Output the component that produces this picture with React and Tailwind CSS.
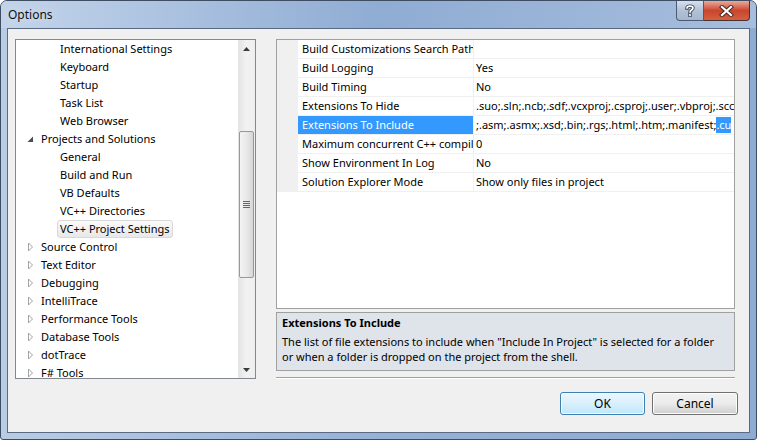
import React from 'react';

const FONT = "font-['Noto_Sans',sans-serif] text-[11px]";

const treeItems = [
  { t: 'International Settings', lvl: 1 },
  { t: 'Keyboard', lvl: 1 },
  { t: 'Startup', lvl: 1 },
  { t: 'Task List', lvl: 1 },
  { t: 'Web Browser', lvl: 1 },
  { t: 'Projects and Solutions', lvl: 0, open: true },
  { t: 'General', lvl: 1 },
  { t: 'Build and Run', lvl: 1 },
  { t: 'VB Defaults', lvl: 1 },
  { t: 'VC++ Directories', lvl: 1 },
  { t: 'VC++ Project Settings', lvl: 1, selected: true },
  { t: 'Source Control', lvl: 0 },
  { t: 'Text Editor', lvl: 0 },
  { t: 'Debugging', lvl: 0 },
  { t: 'IntelliTrace', lvl: 0 },
  { t: 'Performance Tools', lvl: 0 },
  { t: 'Database Tools', lvl: 0 },
  { t: 'dotTrace', lvl: 0 },
  { t: 'F# Tools', lvl: 0 },
];

const props = [
  { n: 'Build Customizations Search Path', v: '' },
  { n: 'Build Logging', v: 'Yes' },
  { n: 'Build Timing', v: 'No' },
  { n: 'Extensions To Hide', v: '.suo;.sln;.ncb;.sdf;.vcxproj;.csproj;.user;.vbproj;.scc;.vspscc;.vssscc' },
  { n: 'Extensions To Include', v: ';.asm;.asmx;.xsd;.bin;.rgs;.html;.htm;.manifest;', sel: true },
  { n: 'Maximum concurrent C++ compilations', v: '0' },
  { n: 'Show Environment In Log', v: 'No' },
  { n: 'Solution Explorer Mode', v: 'Show only files in project' },
];

const Arrow = ({ open }) =>
  open ? (
    <svg width="7" height="7" viewBox="0 0 7 7">
      <path d="M6 0.5 L6 6 L0.5 6 Z" fill="#4d4d4d" />
    </svg>
  ) : (
    <svg width="7" height="10" viewBox="0 0 7 10">
      <path d="M1.5 1 L5.5 5 L1.5 9 Z" fill="#ffffff" stroke="#a3a3a3" strokeWidth="1" />
    </svg>
  );

const TreeRow = ({ item }) => {
  if (item.lvl === 0) {
    return (
      <div className="h-[18px] flex items-center whitespace-nowrap">
        <div className="w-[25px] pl-[11px] flex items-center">
          <Arrow open={item.open} />
        </div>
        <span className="pt-[1px]">{item.t}</span>
      </div>
    );
  }
  return (
    <div className="h-[18px] flex items-center whitespace-nowrap pl-[41px]">
      <span
        className={
          'h-[18px] flex items-center px-[2px] rounded-[3px] border ' +
          (item.selected
            ? 'border-[#d9d9d9] bg-gradient-to-b from-[#fafafa] to-[#e8e8e8]'
            : 'border-transparent')
        }
      >
        {item.t}
      </span>
    </div>
  );
};

const ScrollBar = () => (
  <div className="w-[17px] h-full flex flex-col bg-gradient-to-r from-[#e3e3e3] via-[#f2f2f2] to-[#eeeeee]">
    <div className="h-[17px] flex items-center justify-center">
      <svg width="7" height="4" viewBox="0 0 7 4">
        <path d="M0 4 L3.5 0 L7 4 Z" fill="#3b3b3b" />
      </svg>
    </div>
    <div className="h-[74px]" />
    <div className="mx-[1px] h-[147px] rounded-[2px] border border-[#989898] bg-gradient-to-r from-[#f4f4f4] via-[#e9e9e9] to-[#d6d6d6] flex flex-col items-center justify-center gap-[1px]">
      <div className="w-[7px] h-[1px] bg-[#666]" />
      <div className="w-[7px] h-[1px] bg-[#666]" />
      <div className="w-[7px] h-[1px] bg-[#666]" />
      <div className="w-[7px] h-[1px] bg-[#666]" />
    </div>
    <div className="flex-1" />
    <div className="h-[17px] flex items-center justify-center">
      <svg width="7" height="4" viewBox="0 0 7 4">
        <path d="M0 0 L3.5 4 L7 0 Z" fill="#3b3b3b" />
      </svg>
    </div>
  </div>
);

const Tree = () => (
  <div className="w-[241px] h-[340px] border border-[#828790] bg-white flex overflow-hidden">
    <div className="flex-1 overflow-hidden text-black">
      {treeItems.map((it) => (
        <TreeRow key={it.t} item={it} />
      ))}
    </div>
    <ScrollBar />
  </div>
);

const PropGrid = () => (
  <div className="h-[271px] border border-[#a0a0a0] bg-white flex flex-col overflow-hidden">
    {props.map((p) => (
      <div key={p.n} className="h-[19px] flex shrink-0">
        <div className="w-[21px] bg-[#f0f0f0]" />
        <div className="w-[176px] flex border-b border-r border-[#f0f0f0]">
          <div
            className={
              'flex-1 flex items-center px-[4px] whitespace-nowrap overflow-hidden ' +
              (p.sel ? 'bg-[#3399ff] text-white' : '')
            }
          >
            {p.n}
          </div>
        </div>
        <div className="flex-1 flex border-b border-[#f0f0f0] overflow-hidden">
          {p.sel ? (
            <div className="flex-1 flex items-center pl-[2px] overflow-hidden whitespace-nowrap">
              <span className="shrink-0">{p.v}</span>
              <span className="shrink-0 bg-[#3399ff] text-white">.cu</span>
            </div>
          ) : (
            <div className="flex-1 flex items-center pl-[2px] overflow-hidden whitespace-nowrap">{p.v}</div>
          )}
        </div>
      </div>
    ))}
  </div>
);

const Description = () => (
  <div className="mt-[3px] h-[59px] border border-[#a0a0a0] bg-[#dfe3ea] px-[5px] pt-[1px] leading-[15px] text-black whitespace-nowrap overflow-hidden">
    <div className="font-bold h-[17px] mb-[3px] flex items-center">Extensions To Include</div>
    <div>The list of file extensions to include when "Include In Project" is selected for a folder</div>
    <div>or when a folder is dropped on the project from the shell.</div>
  </div>
);

const CloseGlyph = () => (
  <svg width="15" height="12" viewBox="0 0 15 12">
    <path d="M3 2 L12 10 M12 2 L3 10" stroke="#4a2a26" strokeWidth="4.2" strokeLinecap="square" />
    <path d="M3 2 L12 10 M12 2 L3 10" stroke="#ffffff" strokeWidth="2.2" strokeLinecap="square" />
  </svg>
);

const HelpGlyph = () => (
  <svg width="10" height="13" viewBox="0 0 10 13">
    <path
      d="M2 4 C2 1.5 8 1.5 8 4 C8 6 5 6 5 8 M5 10.5 L5 11.5"
      fill="none"
      stroke="#3a4658"
      strokeWidth="3.4"
      strokeLinecap="square"
    />
    <path
      d="M2 4 C2 1.5 8 1.5 8 4 C8 6 5 6 5 8 M5 10.5 L5 11.5"
      fill="none"
      stroke="#ffffff"
      strokeWidth="1.6"
      strokeLinecap="square"
    />
  </svg>
);

export default function App() {
  return (
    <div className={`${FONT} w-[757px] h-[440px] flex flex-col border border-[#3f4d62] rounded-t-[7px] rounded-b-[3px] bg-gradient-to-r from-[#b9cce5] via-[#96b1d6] to-[#8eabd2] overflow-hidden`}>
      {/* Title bar */}
      <div className="h-[27px] flex items-start shrink-0 bg-gradient-to-r from-[#c3d4ea] via-[#8facd3] to-[#a6bddd]">
        <div className="pl-[7px] pt-[5px] leading-[18px] text-[12px] text-[#111] [text-shadow:0_0_6px_#dce7f5]">Options</div>
        <div className="ml-auto mr-[6px] flex">
          <div className="w-[28px] h-[20px] rounded-bl-[4px] border border-t-0 border-[#4b5a70] bg-gradient-to-b from-[#d6e0ee] via-[#b1c1d6] to-[#a5b7cf] flex items-center justify-center">
            <HelpGlyph />
          </div>
          <div className="w-[46px] h-[20px] rounded-br-[4px] border border-t-0 border-l-0 border-[#4b3030] bg-gradient-to-b from-[#e9a99b] via-[#c8452e] to-[#d5603f] flex items-center justify-center">
            <CloseGlyph />
          </div>
        </div>
      </div>

      {/* Client area */}
      <div className="mx-[6px] h-[405px] border border-[#5a6a82] bg-[#f0f0f0] flex flex-col">
        <div className="flex items-start pl-[7px] pt-[10px] gap-[20px]">
          <Tree />
          <div className="w-[459px] h-[340px] flex flex-col">
            <PropGrid />
            <Description />
            <div className="mt-[6px] h-[1px] bg-[#a0a0a0]" />
            <div className="h-[1px] bg-white" />
          </div>
        </div>
        <div className="mt-[13px] flex justify-end gap-[7px] pr-[11px]">
          <button className="w-[85px] h-[23px] rounded-[3px] border border-[#3c7fb1] bg-gradient-to-b from-[#eaf6fd] via-[#d9f0fc] to-[#bee6fd] shadow-[inset_0_0_0_1px_#ffffff] text-black text-[12px] leading-none">
            OK
          </button>
          <button className="w-[86px] h-[23px] rounded-[3px] border border-[#707070] bg-gradient-to-b from-[#f2f2f2] via-[#ebebeb] to-[#cfcfcf] shadow-[inset_0_0_0_1px_#fcfcfc] text-black text-[12px] leading-none">
            Cancel
          </button>
        </div>
      </div>
    </div>
  );
}
